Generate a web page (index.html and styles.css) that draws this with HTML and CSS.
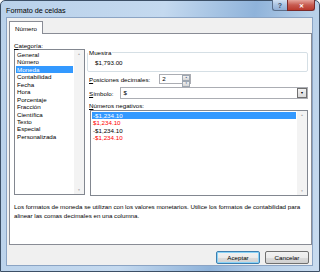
FILE: index.html
```html
<!DOCTYPE html>
<html lang="es">

<head>
    <meta charset="UTF-8">
    <title>Formato de celdas</title>
    <link rel="stylesheet" href="styles.css">
</head>

<body>

    <div class="window">
        <div class="titlebar">
            <span class="title">Formato de celdas</span>
            <div class="caption-buttons">
                <span class="cap-btn help">?</span>
                <span class="cap-btn close">&#x2715;</span>
            </div>
        </div>

        <div class="client">
            <div class="tabs">
                <span class="tab">Número</span>
            </div>

            <div class="panel">
                <div class="columns">
                    <div class="left-col">
                        <p class="label"><u>C</u>ategoría:</p>
                        <div class="listbox category-list">
                            <ul class="items">
                                <li>General</li>
                                <li>Número</li>
                                <li class="selected">Moneda</li>
                                <li>Contabilidad</li>
                                <li>Fecha</li>
                                <li>Hora</li>
                                <li>Porcentaje</li>
                                <li>Fracción</li>
                                <li>Científica</li>
                                <li>Texto</li>
                                <li>Especial</li>
                                <li>Personalizada</li>
                            </ul>
                            <div class="scrollbar">
                                <span class="arrow">&#x25B2;</span>
                                <span class="arrow">&#x25BC;</span>
                            </div>
                        </div>
                    </div>

                    <div class="right-col">
                        <fieldset class="sample">
                            <legend>Muestra</legend>
                            <p class="sample-value">$1,793.00</p>
                        </fieldset>

                        <div class="field-row spin-row">
                            <span class="label"><u>P</u>osiciones decimales:</span>
                            <div class="spin">
                                <span class="spin-value">2</span>
                                <div class="spin-buttons">
                                    <span class="spin-btn">&#x25B2;</span>
                                    <span class="spin-btn">&#x25BC;</span>
                                </div>
                            </div>
                        </div>

                        <div class="field-row combo-row">
                            <span class="label"><u>S</u>ímbolo:</span>
                            <div class="combo">
                                <span class="combo-value">$</span>
                                <span class="combo-btn">&#x25BC;</span>
                            </div>
                        </div>

                        <p class="label neg-label"><u>N</u>úmeros negativos:</p>
                        <div class="listbox negative-list">
                            <ul class="items">
                                <li class="selected">-$1,234.10</li>
                                <li class="red">$1,234.10</li>
                                <li>-$1,234.10</li>
                                <li class="red">-$1,234.10</li>
                            </ul>
                            <div class="scrollbar">
                                <span class="arrow">&#x25B2;</span>
                                <span class="arrow">&#x25BC;</span>
                            </div>
                        </div>
                    </div>
                </div>

                <p class="description">Los formatos de moneda se utilizan con los valores monetarios. Utilice los formatos de contabilidad para alinear las comas decimales en una columna.</p>
            </div>

            <div class="dialog-buttons">
                <button class="btn default">Aceptar</button>
                <button class="btn">Cancelar</button>
            </div>
        </div>
    </div>

</body>

</html>
```

FILE: styles.css
```css
* {
    margin: 0;
    padding: 0;
    box-sizing: border-box;
}

body {
    font-family: "Liberation Sans", Arial, sans-serif;
    font-size: 6.2px;
    color: #000;
    background-color: #fff;
}

ul {
    list-style: none;
}

.window {
    width: 320px;
    height: 272px;
    display: flex;
    flex-direction: column;
    border: 1px solid #3c4f66;
    border-radius: 5px 5px 0 0;
    background: linear-gradient(100deg, #b9d1ea 0%, #c4d9ef 45%, #8fb3da 70%, #b7cfe8 85%, #c9dcf0 100%);
    padding: 0 6px 5px 5px;
}

.titlebar {
    height: 16px;
    display: flex;
    justify-content: space-between;
    align-items: flex-start;
}

.title {
    font-size: 7.2px;
    margin-top: 5px;
    color: #000;
}

.caption-buttons {
    display: flex;
    margin-top: -1px;
    margin-right: -2px;
}

.cap-btn {
    height: 11px;
    display: flex;
    align-items: center;
    justify-content: center;
    border: 1px solid #5b6f8a;
    border-top: none;
    color: #fff;
    font-size: 7px;
    font-weight: bold;
}

.help {
    width: 15px;
    border-radius: 0 0 0 3px;
    border-right: none;
    background: linear-gradient(#d3e2f3, #a9c3e2 50%, #90aed5);
    color: #3b4f6b;
}

.close {
    width: 28px;
    border-radius: 0 0 3px 0;
    border-color: #7a2a2a;
    background: linear-gradient(#e5a59c, #c75a4f 50%, #b9392c);
    font-size: 6px;
}

.client {
    flex: 1;
    background-color: #f0f0f0;
    border: 1px solid #8ba4c4;
    padding: 3px 2px 0 2px;
    display: flex;
    flex-direction: column;
}

.tabs {
    display: flex;
    height: 12px;
}

.tab {
    width: 34px;
    height: 13px;
    background-color: #fff;
    border: 1px solid #898c95;
    border-bottom: none;
    padding: 3px 0 0 5px;
    position: relative;
    z-index: 1;
}

.panel {
    width: 303px;
    height: 212px;
    background-color: #fff;
    border: 1px solid #898c95;
    padding: 8px 3px 0 4px;
}

.columns {
    display: flex;
    gap: 2px;
}

.left-col {
    width: 71px;
}

.label {
    line-height: 7px;
}

.listbox {
    display: flex;
    border: 1px solid #828790;
    background-color: #fff;
}

.category-list {
    height: 146px;
}

.items {
    flex: 1;
    padding: 1px 1px 0 1px;
}

.items li {
    height: 7.45px;
    line-height: 7.45px;
    padding-left: 1px;
    white-space: nowrap;
}

.items li.selected {
    background-color: #3399ff;
    color: #fff;
}

.items li.red {
    color: #ff0000;
}

.scrollbar {
    width: 10px;
    background-color: #f3f3f3;
    display: flex;
    flex-direction: column;
    justify-content: space-between;
    align-items: center;
    padding: 2px 0;
}

.arrow {
    font-size: 3px;
    color: #a8a8a8;
}

.right-col {
    width: 221px;
}

.sample {
    border: 1px solid #d5dfe5;
    border-radius: 2px;
    height: 23px;
    margin-top: 7px;
    padding: 0 6px;
}

.sample legend {
    padding: 0 1px;
    margin-left: -6px;
    line-height: 7px;
}

.sample-value {
    margin-top: 3px;
    margin-left: 1px;
}

.field-row {
    display: flex;
    align-items: center;
    margin-left: 2px;
}

.spin-row {
    margin-top: 2px;
}

.combo-row {
    margin-top: 3px;
}

.spin {
    width: 32px;
    height: 10px;
    margin-left: 9px;
    display: flex;
    border: 1px solid #abadb3;
}

.spin-value {
    flex: 1;
    padding-left: 2px;
    line-height: 8px;
}

.spin-buttons {
    width: 8px;
    display: flex;
    flex-direction: column;
}

.spin-btn {
    flex: 1;
    font-size: 2.5px;
    color: #4d6185;
    text-align: center;
    line-height: 4px;
    background: linear-gradient(#f2f2f2, #d6d6d6);
    border: 1px solid #9ea7b1;
}

.combo {
    flex: 1;
    height: 12px;
    margin-left: 7px;
    display: flex;
    border: 1px solid #abadb3;
    background: linear-gradient(#f7f7f7, #ececec);
}

.combo-value {
    flex: 1;
    padding-left: 2px;
    line-height: 10px;
    background-color: #fff;
}

.combo-btn {
    width: 10px;
    font-size: 3.5px;
    text-align: center;
    line-height: 9px;
    color: #000;
    border: 1px solid #707070;
    background: linear-gradient(#f2f2f2, #d9d9d9);
}

.neg-label {
    margin-top: 3px;
    margin-left: 2px;
}

.negative-list {
    height: 86px;
    margin-top: 1px;
    margin-left: 3px;
}

.description {
    margin-top: 7px;
    line-height: 8.5px;
    width: 292px;
}

.dialog-buttons {
    display: flex;
    justify-content: flex-end;
    gap: 5px;
    margin-top: 6px;
    padding-right: 1px;
}

.btn {
    width: 44px;
    height: 13px;
    font-family: "Liberation Sans", Arial, sans-serif;
    font-size: 6.2px;
    border: 1px solid #707070;
    border-radius: 2px;
    background: linear-gradient(#f2f2f2 0%, #ebebeb 50%, #dddddd 51%, #cfcfcf 100%);
    color: #000;
}

.btn.default {
    border-color: #3c7fb1;
    box-shadow: inset 0 0 0 1px #8ad3f7;
}
```
